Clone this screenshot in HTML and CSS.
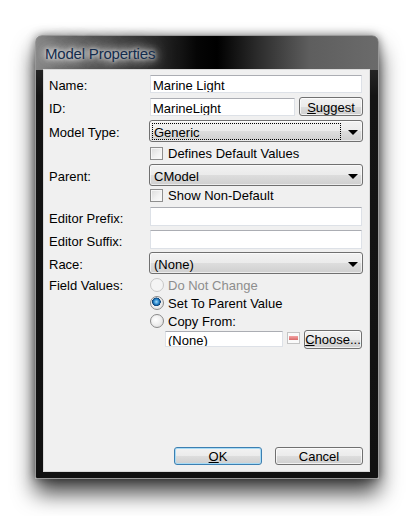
FILE: index.html
```html
<!DOCTYPE html>
<html>
<head>
<meta charset="utf-8">
<link rel="stylesheet" href="styles.css">
</head>
<body>
<div class="window">
  <div class="titlebar"><span class="title">Model Properties</span></div>
  <div class="client">
    <div class="row r-name">
      <span class="lbl">Name:</span>
      <div class="edit grow">Marine Light</div>
    </div>
    <div class="row r-id">
      <span class="lbl">ID:</span>
      <div class="edit id">MarineLight</div>
      <div class="btn suggest"><u>S</u>uggest</div>
    </div>
    <div class="row r-type">
      <span class="lbl">Model Type:</span>
      <div class="combo"><span class="focusrect">Generic</span><span class="arrow"></span></div>
    </div>
    <div class="row r-check1 indent">
      <span class="check"></span><span class="ctext">Defines Default Values</span>
    </div>
    <div class="row r-parent">
      <span class="lbl">Parent:</span>
      <div class="combo"><span class="ctxt">CModel</span><span class="arrow"></span></div>
    </div>
    <div class="row r-check2 indent">
      <span class="check"></span><span class="ctext">Show Non-Default</span>
    </div>
    <div class="row r-prefix">
      <span class="lbl">Editor Prefix:</span>
      <div class="edit grow tall"></div>
    </div>
    <div class="row r-suffix">
      <span class="lbl">Editor Suffix:</span>
      <div class="edit grow tall"></div>
    </div>
    <div class="row r-race">
      <span class="lbl">Race:</span>
      <div class="combo"><span class="ctxt">(None)</span><span class="arrow"></span></div>
    </div>
    <div class="fields">
      <span class="lbl flbl">Field Values:</span>
      <div class="radios">
        <div class="rrow disabled"><span class="radio"></span><span class="ctext">Do Not Change</span></div>
        <div class="rrow"><span class="radio on"></span><span class="ctext">Set To Parent Value</span></div>
        <div class="rrow"><span class="radio"></span><span class="ctext">Copy From:</span></div>
        <div class="copyrow">
          <div class="edit none">(None)</div>
          <span class="minus"><span class="bar"></span></span>
          <div class="btn choose"><u>C</u>hoose...</div>
        </div>
      </div>
    </div>
    <div class="actions">
      <div class="btn dlg default"><u>O</u>K</div>
      <div class="btn dlg">Cancel</div>
    </div>
  </div>
</div>
</body>
</html>
```

FILE: styles.css
```css
* { box-sizing: border-box; }

html, body { background: #ffffff; }

body {
  margin: 0;
  padding: 35px 0 37px 35px;
  min-height: 516px;
  font: 13px "Liberation Sans", Arial, sans-serif;
  color: #000;
}

.window {
  width: 344px;
  height: 444px;
  border: 1px solid #9a9a9a;
  border-radius: 7px 7px 2px 2px;
  padding: 0 8px 6px 7px;
  display: flex;
  flex-direction: column;
  background:
    linear-gradient(90deg, #8a8a8a 0%, #707070 6%, #3a3a3a 30%, #050505 47%, #000 53%, #2c2c2c 65%, #5e5e5e 80%, #6b6b6b 100%) top left / 100% 34px no-repeat,
    linear-gradient(180deg, #3a3a3a 0, #141414 60px, #111 100%);
  box-shadow: 0 14px 22px rgba(0, 0, 0, 0.75), 0 0 10px rgba(0, 0, 0, 0.45);
}

.titlebar {
  height: 33px;
  padding: 9px 0 0 2px;
  line-height: 17px;
}

.title {
  font-size: 15px;
  letter-spacing: -0.2px;
  color: #142c4c;
  text-shadow: 0 0 4px #f0f0f0, 0 0 8px #e0e0e0, 0 0 12px rgba(225, 225, 225, 0.9), 0 0 18px rgba(210, 210, 210, 0.7), 0 0 24px rgba(190, 190, 190, 0.5);
}

.client {
  flex: 1;
  background: #f0f0f0;
  border: 1px solid #d9d9d9;
  padding: 5px 6px 6px 5px;
  display: flex;
  flex-direction: column;
}

.row {
  display: flex;
  align-items: center;
}

.lbl {
  width: 101px;
  flex: none;
  padding-top: 3px;
  white-space: nowrap;
}

.indent { padding-left: 101px; }

.edit {
  height: 18px;
  background: #fff;
  border: 1px solid #dde1e7;
  border-top-color: #abadb3;
  padding: 2px 0 0 2px;
  line-height: 15px;
  white-space: nowrap;
  overflow: hidden;
}

.grow { flex: 1; margin-right: 1px; }
.tall { height: 19px; }

.r-name { height: 18px; }
.r-id { height: 18px; margin-top: 5px; }
.r-type { height: 22px; margin-top: 4px; }
.r-check1 { height: 14px; margin-top: 4px; }
.r-parent { height: 22px; margin-top: 4px; }
.r-check2 { height: 14px; margin-top: 2px; }
.r-prefix { height: 19px; margin-top: 5px; }
.r-suffix { height: 19px; margin-top: 4px; }
.r-race { height: 22px; margin-top: 3px; }

.id { width: 145px; }

.btn {
  border: 1px solid #707070;
  border-radius: 3px;
  background: linear-gradient(180deg, #f2f2f2 0%, #ebebeb 50%, #dddddd 51%, #cfcfcf 100%);
  box-shadow: inset 0 0 0 1px rgba(255, 255, 255, 0.7);
  text-align: center;
  white-space: nowrap;
}

.suggest {
  margin-left: 4px;
  width: 64px;
  height: 19px;
  margin-top: -1px;
  line-height: 17px;
  padding-top: 1px;
}

.combo {
  flex: 1;
  height: 22px;
  margin-left: -1px;
  border: 1px solid #707070;
  border-radius: 3px;
  background: linear-gradient(180deg, #f2f2f2 0%, #ebebeb 50%, #dddddd 51%, #cfcfcf 100%);
  box-shadow: inset 0 0 0 1px rgba(255, 255, 255, 0.6);
  display: flex;
  align-items: center;
  padding: 2px 4px 2px 2px;
}

.focusrect {
  width: 189px;
  height: 17px;
  border: 1px dotted #000;
  padding: 1px 0 0 1px;
  line-height: 15px;
}

.ctxt {
  flex: none;
  width: 189px;
  padding: 2px 0 0 2px;
  line-height: 15px;
}

.arrow {
  margin-left: auto;
  margin-top: 2px;
  width: 0;
  height: 0;
  border-left: 5px solid transparent;
  border-right: 5px solid transparent;
  border-top: 5px solid #000;
}

.check {
  width: 13px;
  height: 13px;
  flex: none;
  border: 1px solid #8f8f8f;
  background: linear-gradient(135deg, #dcdcdc 0%, #f2f2f2 60%, #fbfbfb 100%);
  box-shadow: inset 0 0 0 1px #f6f6f6;
  margin-right: 5px;
}

.ctext {
  white-space: nowrap;
  line-height: 15px;
  padding-top: 1px;
}

.fields {
  display: flex;
  margin-top: 2px;
}

.flbl { height: 18px; line-height: 15px; padding-top: 2px; }

.radios {
  flex: 1;
  display: flex;
  flex-direction: column;
}

.rrow {
  height: 18px;
  display: flex;
  align-items: center;
}

.radio {
  width: 14px;
  height: 14px;
  flex: none;
  border-radius: 50%;
  border: 1px solid #8a8a8a;
  background: radial-gradient(circle at 40% 40%, #ffffff 0%, #f0f0f0 45%, #d6d6d6 100%);
  margin-right: 4px;
}

.radio.on {
  background:
    radial-gradient(circle at 45% 40%, #a9dcf7 0%, #2b8ad0 25%, #0a3f74 42%, transparent 46%),
    radial-gradient(circle at 40% 40%, #ffffff 0%, #f0f0f0 45%, #d6d6d6 100%);
}

.disabled .radio {
  border-color: #c8c8c8;
  background: #f4f4f4;
}

.disabled .ctext { color: #8d8d8d; }

.copyrow {
  height: 18px;
  display: flex;
  align-items: center;
  padding-left: 15px;
}

.none {
  width: 118px;
  height: 16px;
  padding-top: 1px;
  line-height: 15px;
}

.minus {
  margin-left: 4px;
  width: 13px;
  height: 12px;
  border: 1px solid #c4c4c4;
  background: #fafafa;
  display: flex;
  align-items: center;
  justify-content: center;
  margin-top: -3px;
}

.bar {
  width: 9px;
  height: 4px;
  background: linear-gradient(180deg, #f2a3a3, #d96a6a);
}

.choose {
  margin-left: 4px;
  width: 58px;
  height: 19px;
  line-height: 16px;
  padding-top: 1px;
}

.actions {
  margin-top: auto;
  display: flex;
  justify-content: flex-end;
  gap: 13px;
}

.dlg {
  width: 88px;
  height: 18px;
  line-height: 15px;
  padding-top: 1px;
}

.default {
  border-color: #3c7fb1;
  box-shadow: inset 0 0 0 1px #a8dbf5;
}
```
